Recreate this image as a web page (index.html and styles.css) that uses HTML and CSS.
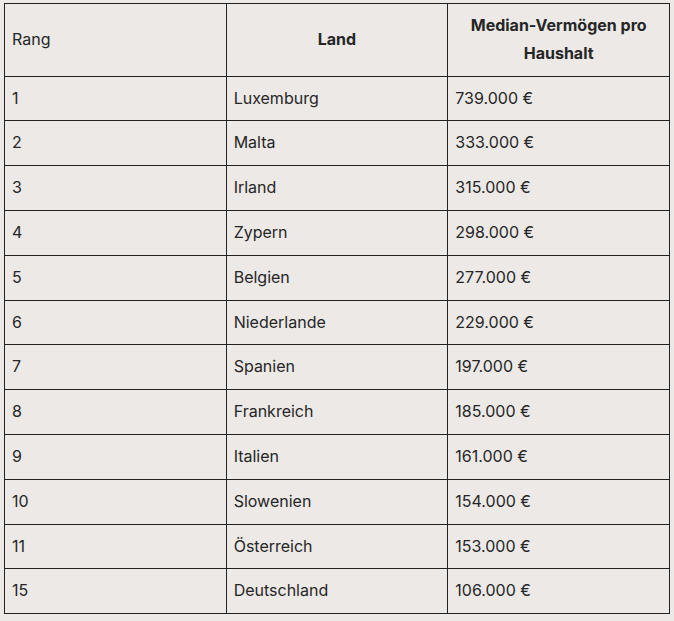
FILE: index.html
```html
<!DOCTYPE html>
<html lang="de">
<head>
<meta charset="utf-8">
<link rel="stylesheet" href="styles.css">
</head>
<body>
<table class="wealth">
<thead>
<tr><th class="rank-h">Rang</th><th>Land</th><th>Median-Vermögen pro Haushalt</th></tr>
</thead>
<tbody>
<tr><td>1</td><td>Luxemburg</td><td>739.000 €</td></tr>
<tr><td>2</td><td>Malta</td><td>333.000 €</td></tr>
<tr><td>3</td><td>Irland</td><td>315.000 €</td></tr>
<tr><td>4</td><td>Zypern</td><td>298.000 €</td></tr>
<tr><td>5</td><td>Belgien</td><td>277.000 €</td></tr>
<tr><td>6</td><td>Niederlande</td><td>229.000 €</td></tr>
<tr><td>7</td><td>Spanien</td><td>197.000 €</td></tr>
<tr><td>8</td><td>Frankreich</td><td>185.000 €</td></tr>
<tr><td>9</td><td>Italien</td><td>161.000 €</td></tr>
<tr><td>10</td><td>Slowenien</td><td>154.000 €</td></tr>
<tr><td>11</td><td>Österreich</td><td>153.000 €</td></tr>
<tr><td>15</td><td>Deutschland</td><td>106.000 €</td></tr>
</tbody>
</table>
</body>
</html>
```
FILE: styles.css
```css
html, body {
  background: #ece9e6;
}
body {
  margin: 3px 4px;
  font-family: Inter, "Noto Sans", sans-serif;
  font-size: 16px;
  color: #262626;
}
.wealth {
  width: 666px;
  border-collapse: collapse;
  table-layout: fixed;
}
.wealth th, .wealth td {
  border: 1.5px solid #222;
  padding: 8px 7px;
  line-height: 27.8px;
  text-align: left;
  vertical-align: middle;
}
.wealth th {
  font-weight: 700;
  text-align: center;
  padding: 8px 12px;
}
.wealth th.rank-h {
  font-weight: 400;
  text-align: left;
  padding: 8px 7px;
}
```
